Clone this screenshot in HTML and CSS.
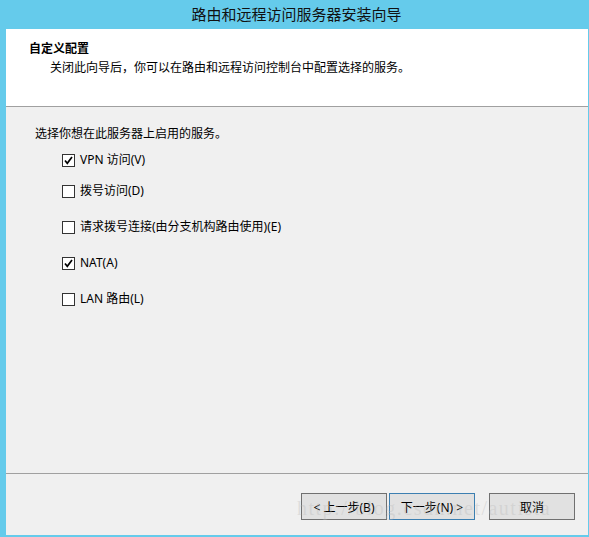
FILE: index.html
```html
<!DOCTYPE html>
<html lang="zh-CN">
<head>
<meta charset="utf-8">
<title>路由和远程访问服务器安装向导</title>
<link rel="stylesheet" href="styles.css">
</head>
<body>
<div class="window">
  <div class="titlebar">路由和远程访问服务器安装向导</div>
  <div class="client">
    <div class="header">
      <div class="h-title">自定义配置</div>
      <div class="h-desc">关闭此向导后，你可以在路由和远程访问控制台中配置选择的服务。</div>
    </div>
    <div class="body">
      <div class="intro">选择你想在此服务器上启用的服务。</div>
      <div class="row r1"><span class="cb checked"><svg viewBox="0 0 11 11" width="11" height="11"><polyline points="2,5.5 4.3,8.3 9,2" fill="none" stroke="#000" stroke-width="1.7"/></svg></span><span class="lbl">VPN 访问(V)</span></div>
      <div class="row r2"><span class="cb"></span><span class="lbl">拨号访问(D)</span></div>
      <div class="row r3"><span class="cb"></span><span class="lbl">请求拨号连接(由分支机构路由使用)(E)</span></div>
      <div class="row r3"><span class="cb checked"><svg viewBox="0 0 11 11" width="11" height="11"><polyline points="2,5.5 4.3,8.3 9,2" fill="none" stroke="#000" stroke-width="1.7"/></svg></span><span class="lbl">NAT(A)</span></div>
      <div class="row r3"><span class="cb"></span><span class="lbl">LAN 路由(L)</span></div>
    </div>
    <div class="footer">
      <button class="btn">&lt; 上一步(B)</button>
      <button class="btn btn-default">下一步(N) &gt;</button>
      <button class="btn btn-cancel">取消</button>
      <div class="watermark">http://blog.csdn.net/autista</div>
    </div>
  </div>
</div>
</body>
</html>
```
FILE: styles.css
```css
html, body {
  margin: 0;
  padding: 0;
}
body {
  background: #65cbeb;
  font-family: "Noto Sans", "Noto Sans CJK SC", sans-serif;
  font-size: 12px;
  color: #000;
}
.window {
  width: 589px;
  height: 537px;
  display: flex;
  flex-direction: column;
  background: #65cbeb;
}
.titlebar {
  height: 29px;
  line-height: 28px;
  text-align: center;
  font-size: 15px;
  padding-left: 4px;
  color: #111;
  font-family: "Noto Sans CJK SC", sans-serif;
}
.client {
  margin: 0 1px 2px 6px;
  flex: 1;
  background: #f0f0f0;
  display: flex;
  flex-direction: column;
  position: relative;
}
.header {
  height: 78px;
  box-sizing: border-box;
  background: #fff;
  border-bottom: 1px solid #a0a0a0;
  padding: 11px 0 0 23px;
  flex: none;
}
.h-title {
  font-weight: bold;
  line-height: 16px;
  font-family: "Noto Sans CJK SC", sans-serif;
}
.h-desc {
  margin-top: 3px;
  padding-left: 21px;
  line-height: 16px;
  font-family: "Noto Sans CJK SC", sans-serif;
}
.body {
  flex: 1;
  padding: 18px 0 0 29px;
  border-bottom: 1px solid #a0a0a0;
}
.intro {
  line-height: 16px;
  font-family: "Noto Sans CJK SC", sans-serif;
}
.row {
  display: flex;
  align-items: center;
  height: 16px;
  padding-left: 27px;
}
.r1 { margin-top: 11px; }
.r2 { margin-top: 15px; }
.r3 { margin-top: 20px; }
.cb {
  width: 11px;
  height: 11px;
  border: 1px solid #333;
  background: #fff;
  display: flex;
  align-items: center;
  justify-content: center;
  flex: none;
}
.lbl {
  margin-left: 5px;
  line-height: 16px;
}
.footer {
  height: 61px;
  flex: none;
  display: flex;
  align-items: flex-start;
  padding-top: 19px;
  padding-left: 295px;
  box-sizing: border-box;
  position: relative;
}
.btn {
  width: 86px;
  height: 27px;
  border: 1px solid #707070;
  background: #e1e1e1;
  font-family: "Noto Sans", "Noto Sans CJK SC", sans-serif;
  font-size: 12px;
  color: #000;
  padding: 0;
  margin: 0;
}
.btn-default {
  margin-left: 2px;
  border-color: #3c7fb1;
}
.btn-cancel {
  margin-left: 14px;
}
.watermark {
  position: absolute;
  left: 291px;
  top: 23px;
  font-family: "Liberation Serif", serif;
  font-size: 20px;
  letter-spacing: 1.5px;
  color: rgba(185, 185, 185, 0.35);
  white-space: nowrap;
  pointer-events: none;
}
```
